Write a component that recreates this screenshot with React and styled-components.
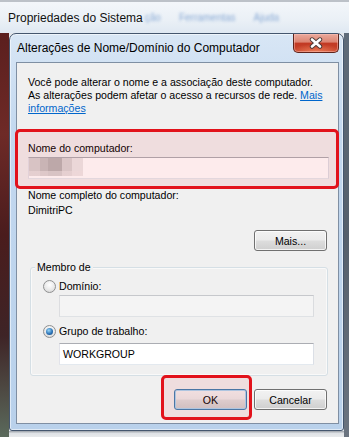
import React from 'react';
import styled, { createGlobalStyle, css } from 'styled-components';

const FONT = `'Liberation Sans', Arial, sans-serif`;

const GlobalStyle = createGlobalStyle`
  html, body {
    margin: 0;
    padding: 0;
    background: #e4e7eb;
  }
  body {
    font-family: ${FONT};
  }
`;

const App = () => {
  return (
    <>
      <GlobalStyle />
      <Screen>
        <ParentBar>
          <ParentTitle>Propriedades do Sistema</ParentTitle>
          <GhostMenu>
            <span>ção</span>
            <span>Ferramentas</span>
            <span>Ajuda</span>
          </GhostMenu>
        </ParentBar>
        <Body>
          <LeftStrip />
          <MainCol>
            <Dialog>
              <TitleRow>
                <DialogTitle>Alterações de Nome/Domínio do Computador</DialogTitle>
                <CloseBtn aria-label="Fechar">
                  <svg width="14" height="12" viewBox="0 0 14 12">
                    <path d="M3 2.5 L11 9.5 M11 2.5 L3 9.5" stroke="#4a3a38" strokeWidth="4.4" strokeLinecap="round" />
                    <path d="M3 2.5 L11 9.5 M11 2.5 L3 9.5" stroke="#ffffff" strokeWidth="2.6" strokeLinecap="round" />
                  </svg>
                </CloseBtn>
              </TitleRow>
              <Client>
                <Intro>
                  <NoWrap>Você pode alterar o nome e a associação deste computador.</NoWrap>
                  <NoWrap>
                    As alterações podem afetar o acesso a recursos de rede. <Link>Mais</Link>
                  </NoWrap>
                  <NoWrap>
                    <Link>informações</Link>
                  </NoWrap>
                </Intro>

                <Highlight>
                  <FieldLabel>Nome do computador:</FieldLabel>
                  <TextBox>
                    <Redacted />
                  </TextBox>
                </Highlight>

                <InfoLine $first>Nome completo do computador:</InfoLine>
                <InfoLine>DimitriPC</InfoLine>

                <ButtonRow $top={12}>
                  <Button>Mais...</Button>
                </ButtonRow>

                <GroupBox>
                  <GroupLabel>Membro de</GroupLabel>
                  <RadioRow>
                    <Radio />
                    <span>Domínio:</span>
                  </RadioRow>
                  <TextBox $indent $disabled $top={2} />
                  <RadioRow $top={8}>
                    <Radio $checked />
                    <span>Grupo de trabalho:</span>
                  </RadioRow>
                  <TextBox $indent $top={5}>WORKGROUP</TextBox>
                </GroupBox>

                <ButtonRow $top={13}>
                  <OkMark>
                    <Button $primary>OK</Button>
                  </OkMark>
                  <Button>Cancelar</Button>
                </ButtonRow>
              </Client>
            </Dialog>
            <BelowDialog />
          </MainCol>
          <RightStrip />
        </Body>
      </Screen>
    </>
  );
};

export default App;

const Screen = styled.div`
  width: 349px;
  height: 437px;
  overflow: hidden;
  display: flex;
  flex-direction: column;
  font-family: ${FONT};
  font-size: 10.6px;
  color: #000;
  background: #e4e7eb;
`;

const ParentBar = styled.div`
  height: 33px;
  flex: none;
  box-sizing: border-box;
  display: flex;
  align-items: center;
  padding: 0 0 0 8px;
  border-top: 2px solid #bcc1c8;
  background: linear-gradient(180deg, #f3f6fa 0%, #eaf0f6 60%, #dfe8f2 100%);
`;

const ParentTitle = styled.span`
  font-size: 12px;
  color: #111;
  margin-top: 1px;
`;

const GhostMenu = styled.div`
  display: flex;
  gap: 18px;
  margin-left: 2px;
  font-size: 10px;
  color: #6f97cc;
  filter: blur(1.4px);
  opacity: 0.8;
`;

const Body = styled.div`
  flex: 1;
  display: flex;
  min-height: 0;
`;

const LeftStrip = styled.div`
  width: 9px;
  flex: none;
  background: linear-gradient(
    180deg,
    #5b1f1e 0%,
    #6e2a27 25%,
    #4a1c1d 50%,
    #3e2426 75%,
    #5b6a5c 100%
  );
`;

const MainCol = styled.div`
  width: 335px;
  flex: none;
  display: flex;
  flex-direction: column;
`;

const Dialog = styled.div`
  height: 398px;
  flex: none;
  box-sizing: border-box;
  display: flex;
  flex-direction: column;
  padding: 0 4px 6px 6px;
  border: 1px solid #44566e;
  border-radius: 7px 7px 3px 3px;
  background: linear-gradient(180deg, #d8e6f5 0%, #c3d8ef 25%, #b9d1eb 100%);
  box-shadow: inset 0 0 0 1px rgba(255, 255, 255, 0.55);
`;

const TitleRow = styled.div`
  height: 28px;
  flex: none;
  display: flex;
  justify-content: space-between;
  align-items: flex-start;
`;

const DialogTitle = styled.span`
  align-self: center;
  margin-left: 1px;
  font-size: 12px;
  color: #000;
`;

const CloseBtn = styled.div`
  width: 46px;
  height: 19px;
  box-sizing: border-box;
  display: flex;
  align-items: center;
  justify-content: center;
  border: 1px solid #5e241c;
  border-top: none;
  border-radius: 0 0 5px 5px;
  background:
    radial-gradient(ellipse 60% 45% at 50% 100%, rgba(245, 140, 100, 0.8), rgba(245, 140, 100, 0) 100%),
    linear-gradient(180deg, #eaa99c 0%, #dc8573 44%, #c23a24 52%, #c6432b 100%);
  box-shadow: inset 0 0 0 1px rgba(255, 200, 190, 0.45);
`;

const Client = styled.div`
  flex: 1;
  display: flex;
  flex-direction: column;
  box-sizing: border-box;
  padding: 0 11px;
  border: 1px solid #7f8fa3;
  background: #f0f0f0;
`;

const Intro = styled.div`
  margin-top: 13px;
  line-height: 13px;
  display: flex;
  flex-direction: column;
`;

const NoWrap = styled.span`
  white-space: nowrap;
`;

const Link = styled.span`
  color: #0066cc;
  text-decoration: underline;
`;

const markBox = css`
  position: relative;
  &::after {
    content: '';
    position: absolute;
    box-sizing: border-box;
    border: 3px solid #e2121b;
    border-radius: 5px;
    background: rgba(232, 30, 40, 0.09);
    pointer-events: none;
  }
`;

const Highlight = styled.div`
  ${markBox}
  margin: 14px -12px 0 -13px;
  padding: 13px 10px 10px 13px;
  &::after {
    inset: 0;
  }
`;

const FieldLabel = styled.div`
  line-height: 13px;
`;

const TextBox = styled.div`
  height: 22px;
  box-sizing: border-box;
  margin-top: ${({ $top }) => ($top !== undefined ? $top : 2)}px;
  margin-left: ${({ $indent }) => ($indent ? '16px' : '0')};
  padding-left: 3px;
  display: flex;
  align-items: center;
  border: 1px solid;
  border-color: #abadb3 #dbdfe6 #e3e9ef #e2e3ea;
  background: ${({ $disabled }) => ($disabled ? '#f4f4f4' : '#ffffff')};
  ${({ $disabled }) =>
    $disabled &&
    css`
      border-color: #c6c8cc #dadcdf #dfe2e5 #dcdde0;
    `}
  font-size: 10.6px;
`;

const Redacted = styled.span`
  width: 54px;
  height: 18px;
  margin-left: -3px;
  align-self: flex-start;
  background:
    linear-gradient(180deg, rgba(255, 255, 255, 0) 0 70%, rgba(240, 235, 235, 0.55) 70% 100%),
    linear-gradient(
      90deg,
      #d7d4d4 0 20%,
      #c6c3c3 20% 36%,
      #b9b6b6 36% 62%,
      #d9d6d6 62% 80%,
      #ece9e9 80% 100%
    );
  filter: blur(0.6px);
`;

const InfoLine = styled.div`
  line-height: 15px;
  margin-top: ${({ $first }) => ($first ? '-1px' : '0')};
`;

const ButtonRow = styled.div`
  display: flex;
  justify-content: flex-end;
  gap: 7px;
  margin-top: ${({ $top }) => $top}px;
`;

const Button = styled.div`
  width: 73px;
  height: 21px;
  box-sizing: border-box;
  display: flex;
  align-items: center;
  justify-content: center;
  border: 1px solid #707070;
  border-radius: 3px;
  background: linear-gradient(180deg, #f2f2f2 0%, #ebebeb 48%, #dddddd 52%, #cfcfcf 100%);
  box-shadow: inset 0 0 0 1px rgba(255, 255, 255, 0.75);
  font-size: 10.6px;
  color: #000;
  ${({ $primary }) =>
    $primary &&
    css`
      border-color: #3c7fb1;
      box-shadow: inset 0 0 0 1px #a9d6f2;
    `}
`;

const OkMark = styled.div`
  ${markBox}
  display: flex;
  &::after {
    inset: -14px -5px -10px -13px;
  }
`;

const GroupBox = styled.div`
  position: relative;
  margin: 16px -1px 0 2px;
  padding: 12px 13px 10px 12px;
  border: 1px solid #d5dfe5;
  border-radius: 3px;
  box-shadow: inset 0 0 0 1px rgba(255, 255, 255, 0.6);
`;

const GroupLabel = styled.span`
  position: absolute;
  top: -7.5px;
  left: 4px;
  padding: 0 2px;
  line-height: 13px;
  background: #f0f0f0;
`;

const RadioRow = styled.div`
  display: flex;
  align-items: center;
  gap: 3px;
  height: 13px;
  line-height: 13px;
  margin-top: ${({ $top }) => $top || 0}px;
`;

const Radio = styled.span`
  position: relative;
  width: 13px;
  height: 13px;
  box-sizing: border-box;
  flex: none;
  border-radius: 50%;
  border: 1px solid #8f9091;
  background: radial-gradient(circle at 50% 35%, #ffffff 0%, #e9e9e9 55%, #d0d0d0 100%);
  ${({ $checked }) =>
    $checked &&
    css`
      &::after {
        content: '';
        position: absolute;
        left: 2px;
        top: 2px;
        width: 7px;
        height: 7px;
        border-radius: 50%;
        background: radial-gradient(circle at 40% 35%, #9ad8f8 0%, #2d74b8 55%, #123f72 100%);
      }
    `}
`;

const BelowDialog = styled.div`
  flex: 1;
  background: linear-gradient(180deg, #9aa0a8 0%, #dfe2e6 40%, #e8eaec 100%);
`;

const RightStrip = styled.div`
  flex: 1;
  background: linear-gradient(180deg, #5f6b79 0%, #56606c 50%, #6b7480 100%);
`;
